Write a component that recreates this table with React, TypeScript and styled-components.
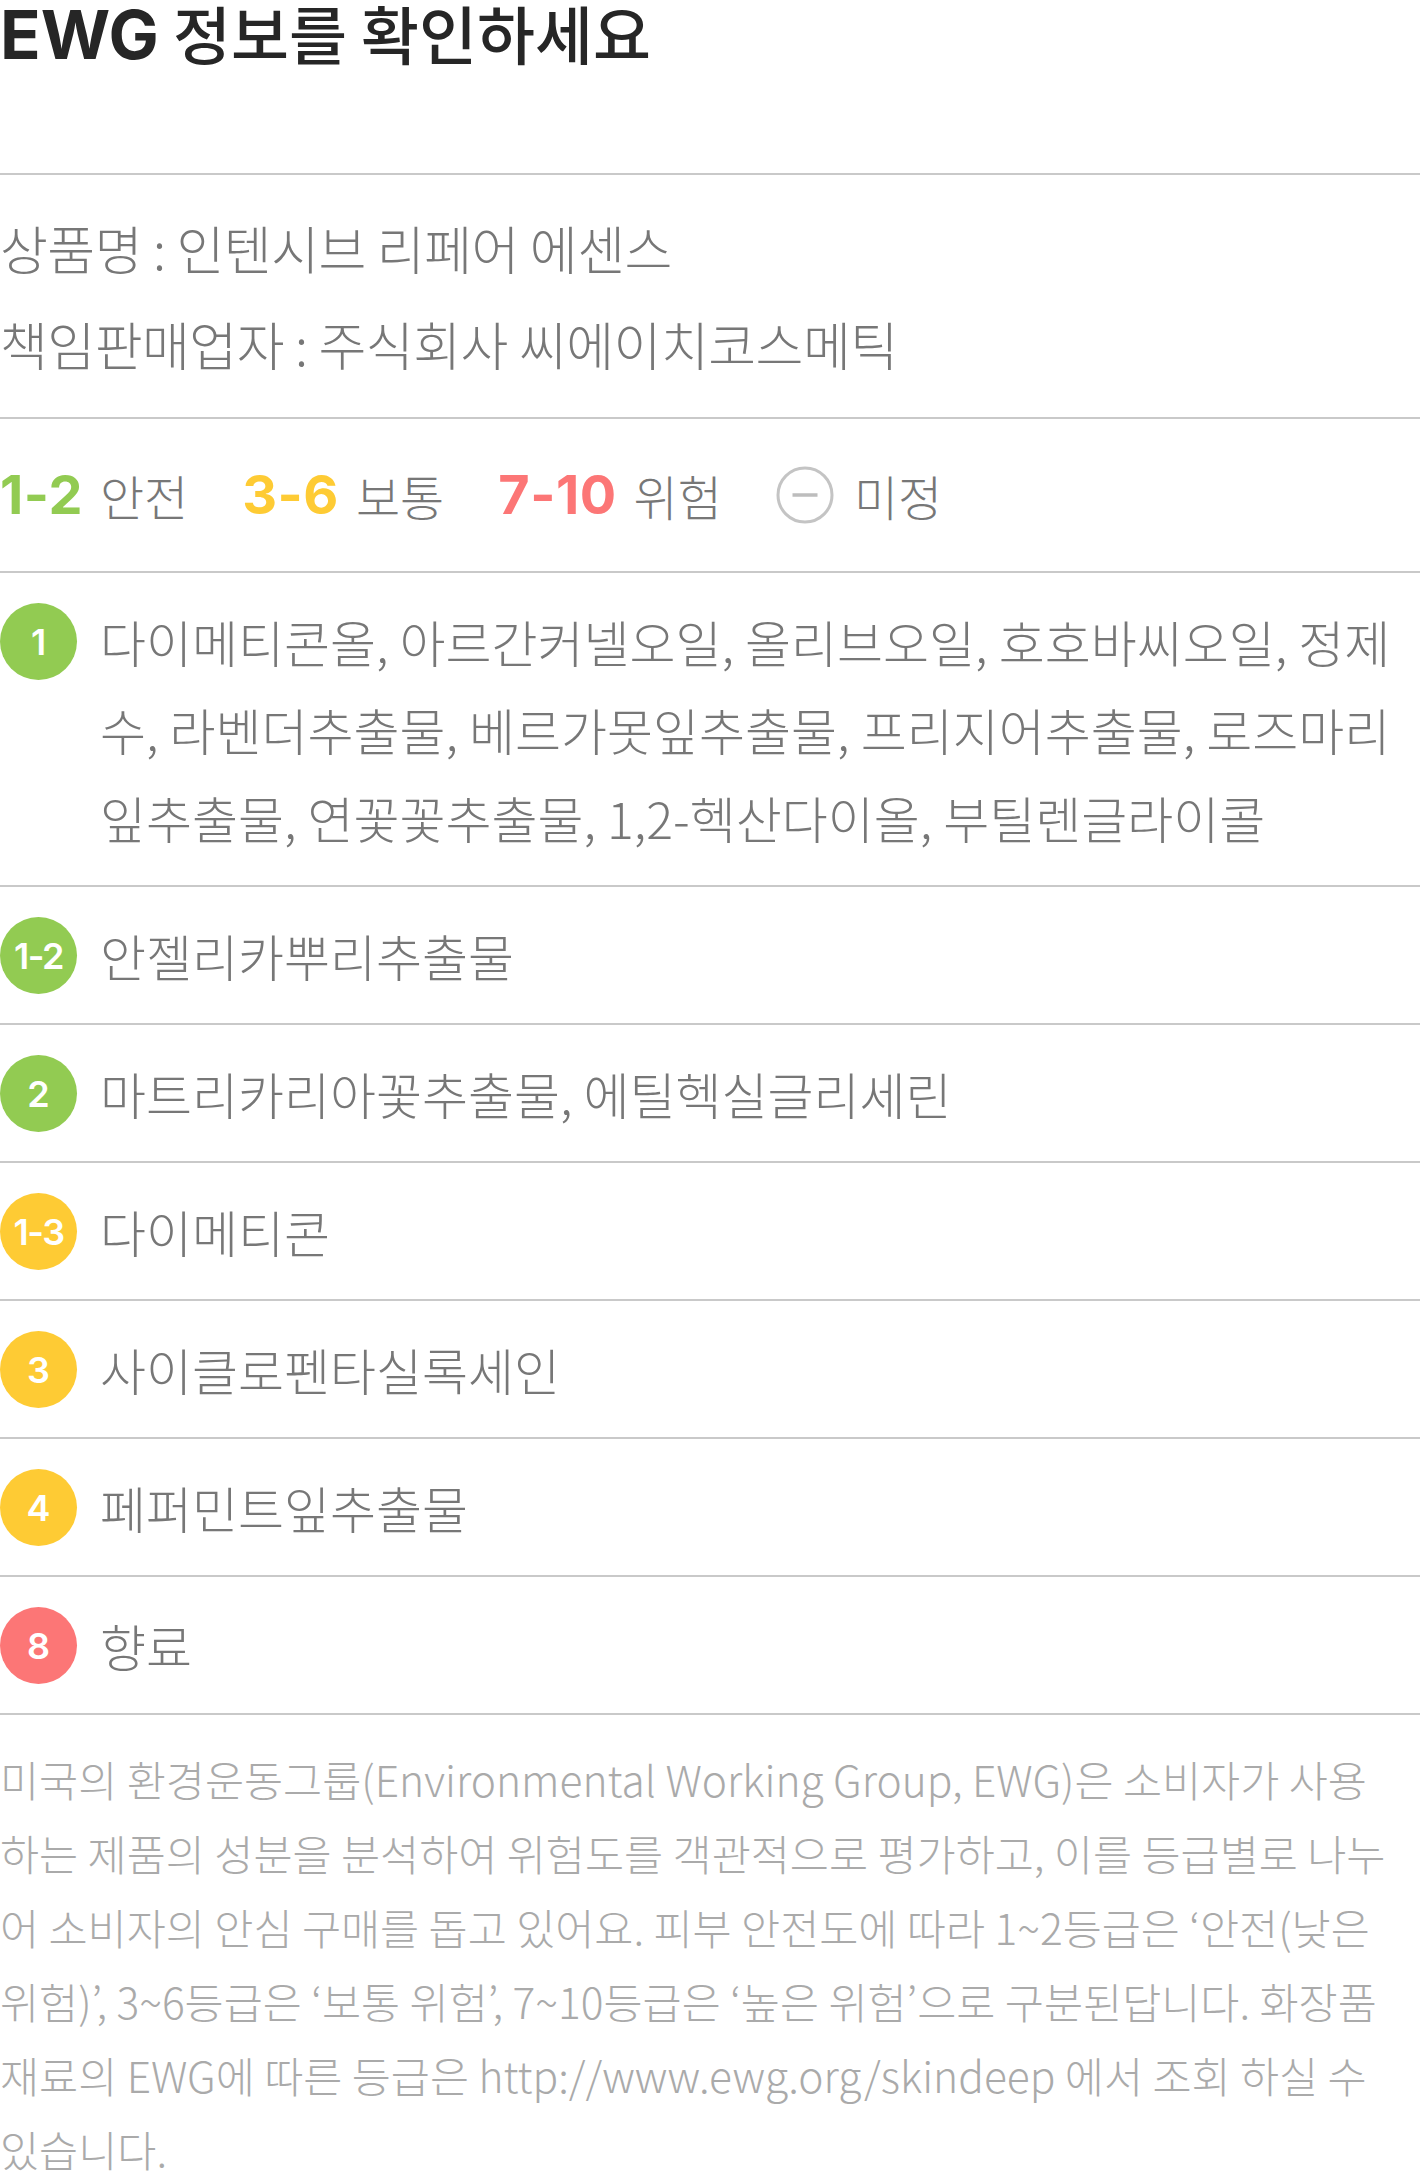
import React from "react";
import styled, { createGlobalStyle } from "styled-components";

const GlobalStyle = createGlobalStyle`
  * { box-sizing: border-box; }
  body {
    margin: 0;
    background: #fff;
  }
`;

const KR = `"Noto Sans CJK KR", "Noto Sans KR", sans-serif`;
const NUM = `Inter, "Noto Sans CJK KR", sans-serif`;

type Tone = "safe" | "normal" | "danger";

const toneColor: Record<Tone, string> = {
  safe: "#92cb52",
  normal: "#fecb34",
  danger: "#fc7676",
};

const legend: { range: string; label: string; tone: Tone }[] = [
  { range: "1-2", label: "안전", tone: "safe" },
  { range: "3-6", label: "보통", tone: "normal" },
  { range: "7-10", label: "위험", tone: "danger" },
];

const ingredients: { grade: string; tone: Tone; names: string }[] = [
  {
    grade: "1",
    tone: "safe",
    names:
      "다이메티콘올, 아르간커넬오일, 올리브오일, 호호바씨오일, 정제수, 라벤더추출물, 베르가못잎추출물, 프리지어추출물, 로즈마리잎추출물, 연꽃꽃추출물, 1,2-헥산다이올, 부틸렌글라이콜",
  },
  { grade: "1-2", tone: "safe", names: "안젤리카뿌리추출물" },
  { grade: "2", tone: "safe", names: "마트리카리아꽃추출물, 에틸헥실글리세린" },
  { grade: "1-3", tone: "normal", names: "다이메티콘" },
  { grade: "3", tone: "normal", names: "사이클로펜타실록세인" },
  { grade: "4", tone: "normal", names: "페퍼민트잎추출물" },
  { grade: "8", tone: "danger", names: "향료" },
];

// 안내문은 원본과 같은 자리에서 줄을 나눈다
const notice = [
  "미국의 환경운동그룹(Environmental Working Group, EWG)은 소비자가 사용",
  "하는 제품의 성분을 분석하여 위험도를 객관적으로 평가하고, 이를 등급별로 나누",
  "어 소비자의 안심 구매를 돕고 있어요. 피부 안전도에 따라 1~2등급은 ‘안전(낮은",
  "위험)’, 3~6등급은 ‘보통 위험’, 7~10등급은 ‘높은 위험’으로 구분된답니다. 화장품",
  "재료의 EWG에 따른 등급은 http://www.ewg.org/skindeep 에서 조회 하실 수",
  "있습니다.",
];

export default function App() {
  return (
    <Page>
      <GlobalStyle />
      <Title>
        <Brand>EWG</Brand> 정보를 확인하세요
      </Title>

      <Info>
        <InfoLine>상품명 : 인텐시브 리페어 에센스</InfoLine>
        <InfoLine>책임판매업자 : 주식회사 씨에이치코스메틱</InfoLine>
      </Info>

      <Legend>
        {legend.map((item) => (
          <LegendItem key={item.range}>
            <Range $tone={item.tone}>{item.range}</Range>
            <LegendLabel>{item.label}</LegendLabel>
          </LegendItem>
        ))}
        <LegendItem>
          <UnknownIcon width="58" height="58" viewBox="0 0 58 58">
            <circle cx="29" cy="29" r="27" fill="none" stroke="#c4c4c4" strokeWidth="3" />
            <line x1="16.5" y1="29" x2="41.5" y2="29" stroke="#bdbdbd" strokeWidth="3.5" />
          </UnknownIcon>
          <LegendLabel>미정</LegendLabel>
        </LegendItem>
      </Legend>

      {ingredients.map((row) => (
        <IngredientRow key={row.grade}>
          <Badge $tone={row.tone} $small={row.grade.length > 1}>
            {row.grade}
          </Badge>
          <Names>{row.names}</Names>
        </IngredientRow>
      ))}

      <Notice>
        {notice.map((line, i) => (
          <React.Fragment key={i}>
            {line}
            {i < notice.length - 1 && <br />}
          </React.Fragment>
        ))}
      </Notice>
    </Page>
  );
}

const Page = styled.main`
  width: 1420px;
  font-family: ${KR};
  color: #777;
`;

const Title = styled.h1`
  margin: 0;
  padding-bottom: 106px;
  border-bottom: 2px solid #c9c9c9;
  font-family: ${KR};
  font-size: 63px;
  font-weight: 500;
  line-height: 64px;
  color: #262626;
`;

const Brand = styled.span`
  font-family: ${NUM};
  font-size: 67px;
  font-weight: 700;
`;

const Info = styled.section`
  padding: 25px 0;
  border-bottom: 2px solid #c9c9c9;
`;

const InfoLine = styled.p`
  margin: 0;
  font-size: 52px;
  font-weight: 300;
  line-height: 96px;
  letter-spacing: -0.5px;
  color: #777;
`;

const Legend = styled.section`
  display: flex;
  align-items: center;
  gap: 54px;
  height: 154px;
  border-bottom: 2px solid #c9c9c9;
`;

const LegendItem = styled.div`
  display: flex;
  align-items: center;
  gap: 17px;
`;

const Range = styled.span<{ $tone: Tone }>`
  font-family: ${NUM};
  font-size: 54px;
  font-weight: 700;
  line-height: 60px;
  letter-spacing: 0.5px;
  color: ${(p) => toneColor[p.$tone]};
`;

const LegendLabel = styled.span`
  font-size: 48px;
  font-weight: 300;
  line-height: 60px;
  color: #777;
`;

const UnknownIcon = styled.svg`
  display: block;
  flex: none;
  margin-right: 3px;
`;

const IngredientRow = styled.div`
  display: flex;
  align-items: flex-start;
  gap: 23px;
  padding: 24px 0;
  border-bottom: 2px solid #c9c9c9;
`;

const Badge = styled.span<{ $tone: Tone; $small: boolean }>`
  flex: none;
  display: flex;
  align-items: center;
  justify-content: center;
  width: 77px;
  height: 77px;
  margin-top: 6px;
  border-radius: 50%;
  background: ${(p) => toneColor[p.$tone]};
  font-family: ${NUM};
  font-size: 36px;
  font-weight: 600;
  letter-spacing: ${(p) => (p.$small ? "-1.5px" : "0")};
  color: #fff;
`;

const Names = styled.p`
  flex: 1;
  margin: 0;
  font-size: 50px;
  font-weight: 300;
  line-height: 88px;
  color: #777;
`;

const Notice = styled.p`
  margin: 0;
  padding-top: 27px;
  font-size: 42.5px;
  font-weight: 300;
  line-height: 74px;
  color: #aaa;
`;
